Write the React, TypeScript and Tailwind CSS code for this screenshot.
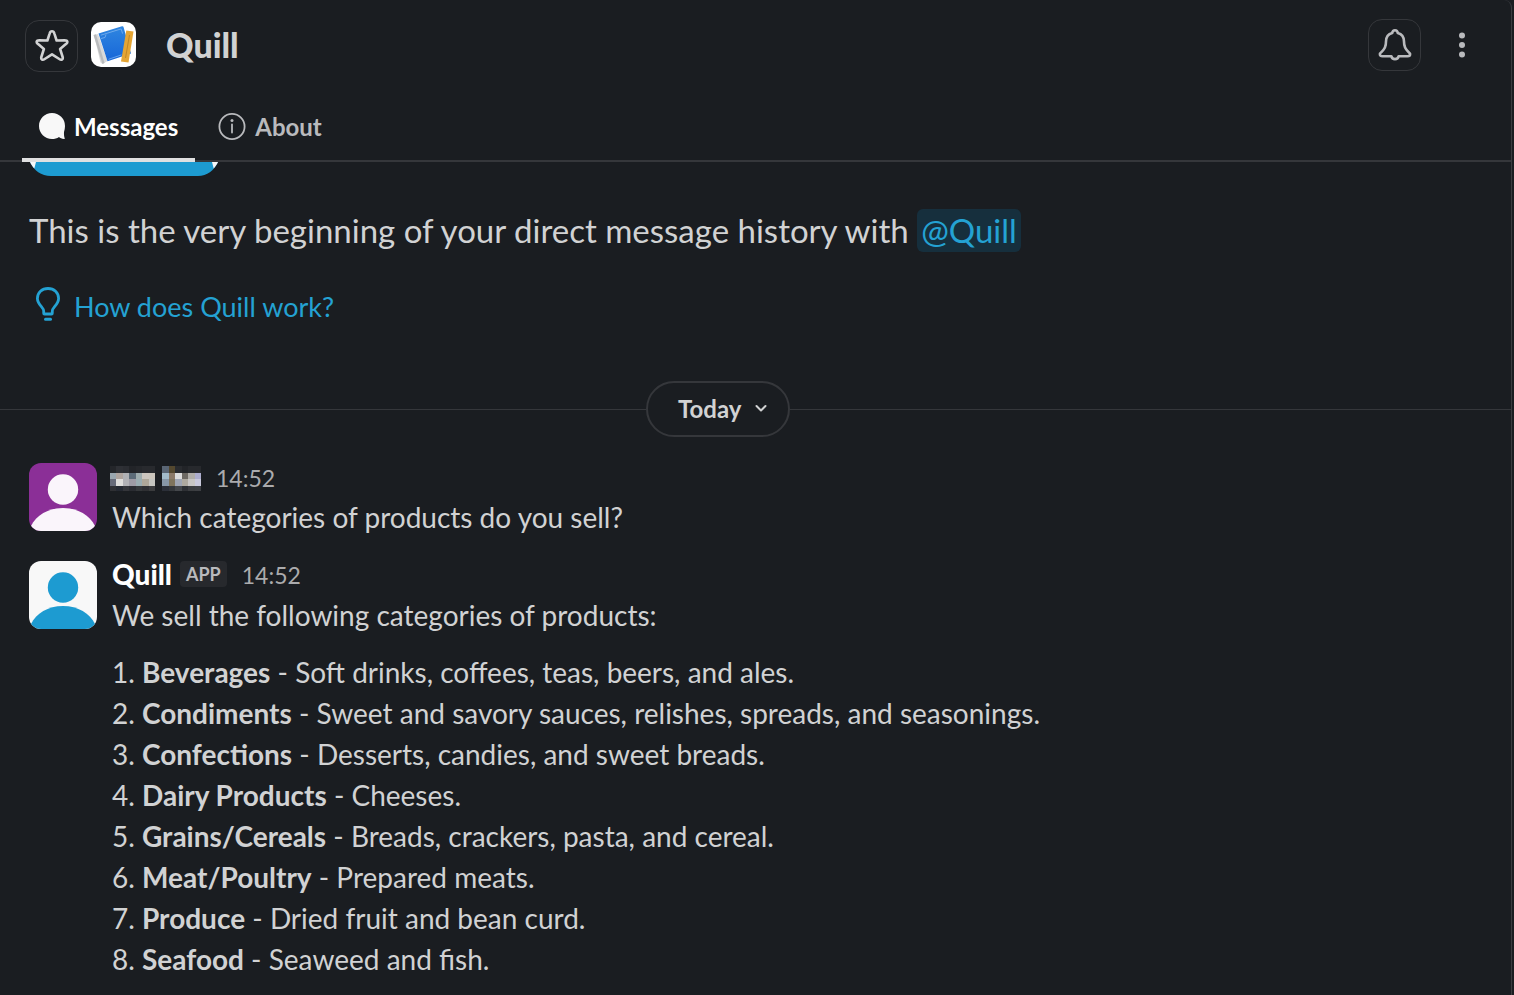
import React, { useState } from 'react';

type Category = {
  name: string;
  description: string;
};

const categories: Category[] = [
  { name: 'Beverages', description: 'Soft drinks, coffees, teas, beers, and ales.' },
  { name: 'Condiments', description: 'Sweet and savory sauces, relishes, spreads, and seasonings.' },
  { name: 'Confections', description: 'Desserts, candies, and sweet breads.' },
  { name: 'Dairy Products', description: 'Cheeses.' },
  { name: 'Grains/Cereals', description: 'Breads, crackers, pasta, and cereal.' },
  { name: 'Meat/Poultry', description: 'Prepared meats.' },
  { name: 'Produce', description: 'Dried fruit and bean curd.' },
  { name: 'Seafood', description: 'Seaweed and fish.' },
];

// Blocks of the hidden sender name, row by row
const firstNameBlocks: string[][] = [
  ['#24262a', '#2e3035', '#2b2d32', '#222428', '#25272b', '#282a2e', '#282a2e'],
  ['#9aa7af', '#aea49e', '#b0b1b5', '#5c6b78', '#9eacae', '#ccc6bf', '#cbc5bc'],
  ['#676b79', '#dedddb', '#b1b1b5', '#9e9ba5', '#9aacb1', '#aea799', '#c4c4bf'],
  ['#2f3034', '#252932', '#34353a', '#2a2c32', '#34373a', '#2f3033', '#3a3b3d'],
];
const lastNameBlocks: string[][] = [
  ['#5a6675', '#54482f', '#292b2f', '#222428', '#27292d', '#27292d'],
  ['#a3bccb', '#8c7a68', '#dcdcdc', '#6d6963', '#b0ada8', '#adadce'],
  ['#8797a7', '#7f745d', '#9fa5b3', '#aea99f', '#c8c6c4', '#c9c9dc'],
  ['#2b2f38', '#34373b', '#44474b', '#2e3034', '#3b3d40', '#3d3f43'],
];

const StarIcon = () => (
  <svg width="34" height="34" viewBox="0 0 34 34" fill="none" stroke="#d1d2d3" strokeWidth="2.6" strokeLinejoin="round">
    <path d="M17 2.3c1.300 0 2 .9 2.400 2.300l2.200 6.900 8-.3c1.700 0 2.500.6 2.700 1.400.2.8-.2 1.700-1.400 2.500l-5.800 4.900 2.400 7.500c.5 1.500.3 2.500-.4 3-.7.5-1.600.4-2.800-.5L17 25.300l-7.300 4.700c-1.200.9-2.100 1-2.800.5-.7-.5-.9-1.500-.4-3l2.400-7.500-5.800-4.900c-1.200-.8-1.600-1.700-1.400-2.500.2-.8 1-1.400 2.700-1.400l8 .3 2.200-6.900C15 3.200 15.700 2.300 17 2.300Z" />
  </svg>
);

const BellIcon = () => (
  <svg width="34" height="34" viewBox="0 0 34 34" fill="none" stroke="#b9babd" strokeWidth="2.6" strokeLinejoin="round" strokeLinecap="round">
    <path d="M14.200 5c.2-1.500 1.200-2.700 2.800-2.700s2.600 1.200 2.800 2.700c4.100 1 6.200 4.300 6.200 8.600 0 4.600 1 7.300 4 9.800 1.500 1.200 2.100 1.900 2.100 2.900 0 1.200-.9 1.900-2.500 1.900H20.600c-.3 1.700-1.600 2.900-3.600 2.900s-3.300-1.200-3.600-2.900H4.400c-1.600 0-2.500-.7-2.500-1.900 0-1 .6-1.700 2.100-2.900 3-2.500 4-5.200 4-9.800 0-4.300 2.100-7.600 6.200-8.600Z" />
  </svg>
);

const MoreIcon = () => (
  <svg width="8" height="26" viewBox="0 0 8 26" fill="#b9babd">
    <circle cx="4" cy="3.500" r="3" />
    <circle cx="4" cy="13" r="3" />
    <circle cx="4" cy="22.500" r="3" />
  </svg>
);

const AppIcon = () => (
  <svg className="shrink-0 rounded-[10px]" width="45" height="45" viewBox="0 0 45 45">
    <defs>
      <linearGradient id="cover" x1="0" y1="0" x2="0" y2="1">
        <stop offset="0" stopColor="#2f86e0" />
        <stop offset="1" stopColor="#1766d8" />
      </linearGradient>
    </defs>
    <rect width="45" height="45" fill="#fff" />
    <path d="M3 13l4-1 9.500 27-5 3-2-1.500z" fill="#d9d9d9" />
    <path d="M2.500 13l2.500-.8 8.500 28.800-2 1z" fill="#b9bbbd" />
    <path d="M7.500 11.500L31 4.200c.8-.2 1.300 0 1.500.8L40 31.500l-23.500 7.800z" fill="url(#cover)" />
    <path d="M9.800 13.200l20.300-6.300 1.500 4.700M10 16.500l4-1 1-3M17.500 37.300l13-4.400" fill="none" stroke="#8bbcf0" strokeWidth=".7" />
    <path d="M35.300 8.600l7.200.9-5 31-7.500-1z" fill="#e5a534" />
    <path d="M38.500 13l-4 23" stroke="#b97f22" strokeWidth=".8" />
  </svg>
);

const BubbleIcon = () => (
  <svg width="28" height="28" viewBox="0 0 28 28" fill="#f8f8f8">
    <path d="M14 0C6.800 0 1 5.800 1 13s5.800 13 13 13c2.600 0 5-.8 7-2.100 1.100.9 2.800 1.700 5 2.100.6.100.9-.3.700-.8-.6-1.400-.8-3.700-.7-6.200.6-1.800 1-3.900 1-6A13 13 0 0 0 14 0Z" />
  </svg>
);

const InfoIcon = () => (
  <svg width="28" height="28" viewBox="0 0 28 28" fill="none" stroke="#b9babd">
    <circle cx="14" cy="13.500" r="12.600" strokeWidth="1.800" />
    <path d="M14 11.500v8" strokeWidth="1.800" strokeLinecap="round" />
    <circle cx="14" cy="7.500" r="1.500" fill="#b9babd" stroke="none" />
  </svg>
);

const BulbIcon = () => (
  <svg className="mb-[6px]" width="26" height="34" viewBox="0 0 26 34" fill="none" stroke="#24a2d3" strokeWidth="2.800" strokeLinejoin="round" strokeLinecap="round">
    <path d="M9.500 27h7c.5 0 .8-.3.8-.8v-2c0-1.500.7-2.600 2.300-4.500 2.300-2.700 4-4.900 4-8.200C23.600 5.600 19 1.500 13 1.500S2.400 5.600 2.400 11.500c0 3.300 1.700 5.500 4 8.200 1.600 1.900 2.300 3 2.300 4.500v2c0 .5.3.8.8.8Z" />
    <path d="M10.500 32.200h5" strokeWidth="3" />
  </svg>
);

const Avatar = ({ background, figure }: { background: string; figure: string }) => (
  <svg className="shrink-0 rounded-[12px]" width="68" height="68" viewBox="0 0 68 68">
    <rect width="68" height="68" fill={background} />
    <circle cx="34" cy="26.500" r="15.200" fill={figure} />
    <path d="M2 68v-5c5-10.500 17-18 32-18s27 7.500 32 18v5z" fill={figure} />
  </svg>
);

const NameBlocks = ({ rows }: { rows: string[][] }) => {
  const heights = [7, 6, 7, 5];
  const tops = [0, 7, 13, 20];
  const width = rows[0].length * 6.5;
  return (
    <svg width={Math.floor(width)} height="25" viewBox={`0 0 ${width} 25`} preserveAspectRatio="none" shapeRendering="crispEdges">
      {rows.map((row, y) =>
        row.map((color, x) => (
          <rect key={`${x}-${y}`} x={x * 6.5} y={tops[y]} width="6.5" height={heights[y]} fill={color} />
        ))
      )}
    </svg>
  );
};

const App = () => {
  const [tab, setTab] = useState<string>('messages');
  const activeTab = 'border-[#e0e0e1] text-white';
  const idleTab = 'border-transparent text-[#b9babd]';

  return (
    <div className="min-h-screen bg-[#1a1d21] pr-[2px] font-['Lato',sans-serif] text-[#d1d2d3]">
      <div className="min-h-screen rounded-tr-lg border-r border-[#3a3c40] pb-2">
        <header className="flex items-center pt-[19px] pr-8 pl-[25px]">
          <button aria-label="Star" className="mt-px flex h-[52px] w-[53px] items-center justify-center rounded-[14px] border border-[#35373b]">
            <StarIcon />
          </button>
          <div className="ml-[13px] pb-[2px]">
            <AppIcon />
          </div>
          <h1 className="ml-[30px] pb-[2px] text-[34px] leading-[44px] font-black">Quill</h1>
          <button aria-label="Notifications" className="mb-px ml-auto flex h-[52px] w-[53px] items-center justify-center rounded-[14px] border border-[#35373b]">
            <BellIcon />
          </button>
          <button aria-label="More actions" className="mb-px ml-6 flex h-[52px] w-[34px] items-center justify-center">
            <MoreIcon />
          </button>
        </header>

        <nav className="mt-6 flex border-b-2 border-[#35373b] pl-[22px]">
          <button
            className={`-mb-[2px] flex h-[66px] items-center gap-2 border-b-4 pr-[17px] pl-4 text-[24px] font-bold ${tab === 'messages' ? activeTab : idleTab}`}
            onClick={() => setTab('messages')}
          >
            <BubbleIcon />
            Messages
          </button>
          <button
            className={`-mb-[2px] ml-[7px] flex h-[66px] items-center gap-[9px] border-b-4 px-4 text-[24px] font-bold ${tab === 'about' ? activeTab : idleTab}`}
            onClick={() => setTab('about')}
          >
            <InfoIcon />
            About
          </button>
        </nav>

        <main>
          {/* Bottom edge of the large profile picture, scrolled under the tabs */}
          <svg className="ml-[29px] block" width="190" height="14" viewBox="0 0 190 14">
            <path d="M1 0h188c-4 8.500-11 14-20 14H22C12 14 5 8.500 1 0z" fill="#1d9bd1" />
            <path d="M1 0h6L5.300 6.500C3.500 4.500 2 2.300 1 0zM189 0h-6l1.700 6.500C186.500 4.500 188 2.300 189 0z" fill="#f8f8f8" />
          </svg>

          <section className="px-[29px]">
            <p className="mt-8 text-[33px] leading-[44px]">
              This is the very beginning of your direct message history with{' '}
              <a href="#quill" className="inline-block rounded-[6px] bg-[#162f3d] px-1 leading-[43px] text-[#24a2d3]">@Quill</a>
            </p>
            <a href="#help" className="mt-[34px] ml-[6px] inline-flex items-center gap-[13px] text-[27px] leading-[41px] text-[#24a2d3]">
              <BulbIcon />
              How does Quill work?
            </a>
          </section>

          <div className="mt-[54px] flex items-center">
            <div className="h-px flex-[26] bg-[#35373b]"></div>
            <button className="flex h-[56px] w-[144px] items-center justify-center gap-[13px] rounded-full border-2 border-[#35373b] pl-[10px] text-[24px] font-bold">
              Today
              <svg width="14" height="10" viewBox="0 0 14 10" fill="none" stroke="#d1d2d3" strokeWidth="2" strokeLinecap="round" strokeLinejoin="round">
                <path d="M2.500 2L7 6.500 11.500 2" />
              </svg>
            </button>
            <div className="h-px flex-[29] bg-[#35373b]"></div>
          </div>

          <article className="mt-[26px] flex gap-[15px] px-[29px]">
            <Avatar background="#8b2f97" figure="#faf5fb" />
            <div>
              <div className="-ml-[2px] flex h-[34px] items-center pb-1">
                <NameBlocks rows={firstNameBlocks} />
                <div className="ml-[7px]">
                  <NameBlocks rows={lastNameBlocks} />
                </div>
                <time className="ml-[15px] text-[23px] leading-[28px] text-[#ababad]">14:52</time>
              </div>
              <p className="text-[28px] leading-[41px]">Which categories of products do you sell?</p>
            </div>
          </article>

          <article className="mt-[23px] flex gap-[15px] px-[29px]">
            <Avatar background="#f8f8f8" figure="#1d9bd1" />
            <div>
              <div className="flex h-[34px] items-center pb-2">
                <span className="text-[28px] leading-[28px] font-black text-white">Quill</span>
                <span className="ml-2 rounded-[4px] bg-[#27292d] px-[6px] text-[18px] leading-[26px] font-bold text-[#b9babd]">APP</span>
                <time className="ml-[15px] pt-[2px] text-[23px] leading-[28px] text-[#ababad]">14:52</time>
              </div>
              <p className="text-[28px] leading-[41px]">We sell the following categories of products:</p>
              <ol className="mt-4 text-[28px] leading-[41px]">
                {categories.map((category, index) => (
                  <li key={category.name} className="flex">
                    <span className="w-[30px] shrink-0">{index + 1}.</span>
                    <span>
                      <b>{category.name}</b> - {category.description}
                    </span>
                  </li>
                ))}
              </ol>
            </div>
          </article>
        </main>
      </div>
    </div>
  );
};

export default App;
